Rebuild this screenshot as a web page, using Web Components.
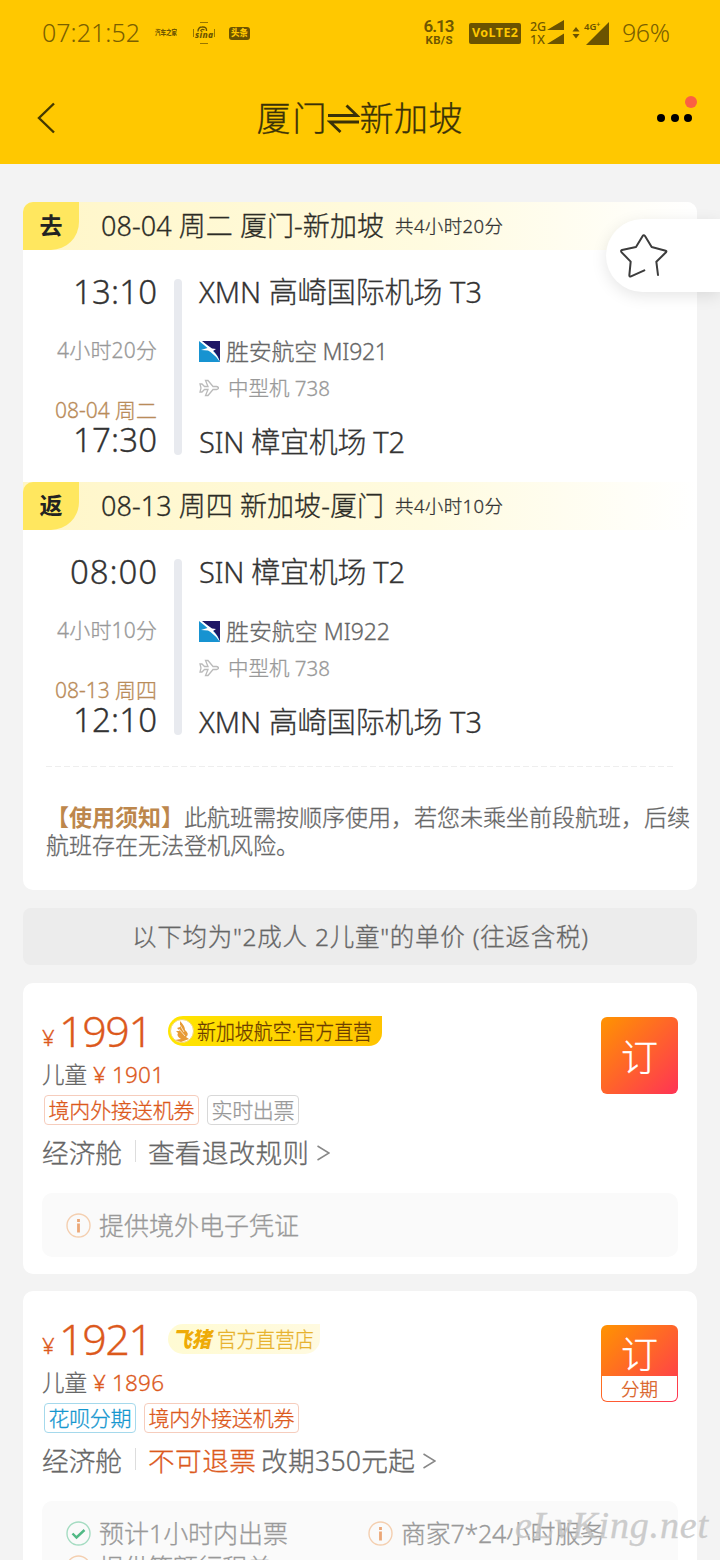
<!DOCTYPE html>
<html lang="zh-CN">
<head>
<meta charset="utf-8">
<title>厦门⇌新加坡</title>
<style>
html,body{margin:0;padding:0}
body{width:720px;height:1560px;overflow:hidden;background:#f3f3f3;font-family:"Noto Sans","Noto Sans CJK SC",sans-serif;font-weight:300;color:#333;-webkit-text-stroke:.3px currentColor}
</style>
</head>
<body>
<fare-page></fare-page>
<script>
const define = (name, render, after) => customElements.define(name, class extends HTMLElement {
  connectedCallback() {
    if (this.shadowRoot) return;
    const t = document.createElement('template');
    t.innerHTML = render(this);
    this.attachShadow({mode: 'open'}).appendChild(document.importNode(t.content, true));
    if (after) after(this);
  }
});
const a = (el, n, d = '') => el.getAttribute(n) ?? d;

// A single line of text set to a fixed measure: w = width, s = font size, squeeze = condense glyphs.
define('fit-text', el => `<style>
:host{display:block;flex:none;width:${a(el,'w')}px;font-size:${a(el,'s')}px;line-height:${a(el,'lh', 1.4)};white-space:pre;color:${a(el,'c','inherit')};font-weight:${a(el,'b','inherit')};${+a(el,'b','300') >= 500 ? '-webkit-text-stroke:0' : ''}}
span{display:inline-block;transform-origin:0 50%}</style><span><slot></slot></span>`, el => {
  const s = el.shadowRoot.querySelector('span');
  const w = +a(el, 'w'), nat = s.getBoundingClientRect().width, n = [...el.textContent].length;
  if (el.hasAttribute('squeeze')) s.style.transform = `scaleX(${w / nat})`;
  else if (n > 1) s.style.letterSpacing = (w - nat) / (n - 1) + 'px';
});

define('status-bar', () => `<style>
:host{display:flex;height:66px;align-items:center;padding-left:42px;color:#705700;box-sizing:border-box}
svg{display:block;flex:none;fill:#6b5300;-webkit-text-stroke:0}
.t{color:#7a5f00;-webkit-text-stroke:0;position:relative;top:-1px}
.apps{display:flex;align-items:center;margin-left:15px}
.sina{margin:0 14px 0 16px;width:22px;height:22px;display:grid;place-items:center}
.tt{background:#6b5300;color:#ffc800;border-radius:3px;width:21px;height:13px;display:grid;place-items:center}
.net{margin-left:173px;width:32px;display:flex;flex-direction:column;align-items:center;font-family:Roboto,sans-serif;margin-top:-2px}
.net fit-text{flex:none}
.lte{margin-left:14px;width:52px;height:21px;border-radius:2px;background:#6b5300;color:#ffc800;display:flex;align-items:center;justify-content:center}
.sig{margin-left:9px;display:flex;width:36px;gap:1px}
.col{display:flex;flex-direction:column}
</style>
<fit-text class="t" s="25" w="98">07:21:52</fit-text>
<div class="apps"><fit-text s="7" w="22" b="900" squeeze>汽车之家</fit-text>
<svg class="sina" viewBox="0 0 22 22"><g fill="none" stroke="#6b5300"><path d="M7 .5h8M7 21.500h8M.5 7v8M21.500 7v8" stroke-width=".7"/><path d="M5 9.500Q5 5 9 5Q14 4.500 13.500 9" stroke-width="1.400"/><path d="M7.500 9Q9 6.500 11.500 8" stroke-width="1.300"/></g><text x="2" y="15.500" font-family="Noto Sans" font-style="italic" font-weight="800" font-size="8.500" textLength="18">sina</text></svg>
<div class="tt"><fit-text s="9" w="17" b="900" lh="1.2" squeeze>头条</fit-text></div></div>
<div class="net"><fit-text s="17" w="31" b="600" lh="15px">6.13</fit-text><fit-text s="11.500" w="27" b="700" lh="12px">KB/S</fit-text></div>
<div class="lte"><fit-text s="12.500" w="46" b="700" lh="1">VoLTE2</fit-text></div>
<div class="sig"><div class="col"><fit-text s="12.500" w="16" b="500" lh="13px">2G</fit-text><fit-text s="12.500" w="15" b="500" lh="13px">1X</fit-text></div>
<svg width="18" height="24" viewBox="0 0 18 24"><path d="M0 10L17 0V10zM0 24L17 13.500V24z"/></svg></div>
<svg style="margin-left:6px" width="8" height="12" viewBox="0 0 8 12"><path d="M.5 4.500L4 0L7.500 4.500zM.5 7L4 11.500L7.500 7z"/></svg>
<svg style="margin-left:4px" width="26" height="24" viewBox="0 0 26 24"><path d="M2 24L25 1V24z"/><text x="0" y="8.500" font-family="Noto Sans" font-weight="600" font-size="9.500">4G<tspan dy="-2.500" font-size="7">+</tspan></text></svg>
<fit-text class="t" style="margin-left:12px" s="25" w="48">96%</fit-text>`);

define('nav-bar', () => `<style>
:host{display:flex;height:98px;align-items:center;justify-content:space-between;box-sizing:border-box;padding:7px 28px 0 37px;color:#3a3108}
svg{display:block}
.t{display:flex;align-items:center}
.m{position:relative;display:flex;gap:5.500px;margin-top:-2px}
i{width:8px;height:8px;border-radius:50%;background:#000}
b{position:absolute;right:-5px;top:-18px;width:12.500px;height:12.500px;border-radius:50%;background:#fb6042}
</style>
<svg width="20" height="32" viewBox="0 0 20 32" fill="none" stroke="#453900" stroke-width="2.400" style="margin-top:-2px"><path d="M17 1.500L2 16L17 30.500"/></svg>
<div class="t" style="margin-left:5px"><fit-text s="34" w="70">厦门</fit-text>
<svg width="33" height="34" viewBox="0 0 33 34" fill="none" stroke="#3a3108" stroke-width="2.800"><path d="M1 13.500H30L19.500 3.500M32 20H3L13.500 30"/></svg>
<fit-text s="34" w="103">新加坡</fit-text></div>
<div class="m"><i></i><i></i><i></i><b></b></div>`);

define('flight-leg', el => `<style>
:host{display:block;height:280px}
.band{height:48px;display:flex;align-items:center;background:linear-gradient(90deg,#fff6c8,#fffbe0 60%,#fff);border-radius:${a(el,'round')?'10px 10px 0 0':'0'}}
.tab{width:56px;height:48px;background:#ffe75f;border-radius:10px 0 28px 0;display:grid;place-items:center;margin-right:22px;color:#222}
.body{display:flex;padding-top:25px}
.l{width:134px;display:flex;flex-direction:column;align-items:flex-end}
.bar{width:8px;height:176px;border-radius:4px;background:#e8eaef;margin:4px 17px 0 17px}
.row{display:flex;align-items:center}
svg{display:block}
</style>
<div class="band"><div class="tab"><fit-text s="23" w="23" b="600" style="position:relative;top:-1px">${a(el,'tag')}</fit-text></div>
<fit-text s="27" w="283" c="#2c2c26">${a(el,'title')}</fit-text><fit-text style="margin-left:11px" s="18.500" w="108" c="#333">${a(el,'total')}</fit-text></div>
<div class="body"><div class="l">
<fit-text s="33" w="${a(el,'w1')}" lh="33px">${a(el,'dep')}</fit-text>
<fit-text style="margin-top:27px" s="21" w="100" lh="30px" c="#999">${a(el,'dur')}</fit-text>
<fit-text style="margin-top:31px" s="21" w="102" lh="28px" c="#b98c5a">${a(el,'date')}</fit-text>
<fit-text style="margin-top:-1px" s="33" w="84" lh="33px">${a(el,'arr')}</fit-text></div>
<div class="bar"></div><div>
<fit-text s="29" w="${a(el,'wa')}" lh="33px">${a(el,'from')}</fit-text>
<div class="row" style="margin-top:27px"><svg width="21" height="21" viewBox="0 0 21 21"><path fill="#1793d1" d="M0 0H21V21H0z"/><path fill="#1e1765" d="M2 0H21V21C19 13 13 7 2 0z"/><path fill="#fff" d="M0 0L3 0Q9 5 13 7.500L17 8L14 10Q18.500 14 21 21Q17 15 11.500 11L9 9.500L2 9L8.500 7Q5 4 0 0z"/></svg>
<fit-text style="margin-left:6px" s="23" w="${a(el,'wf')}" lh="32px" c="#666">${a(el,'flight')}</fit-text></div>
<div class="row" style="margin-top:7px"><svg width="20" height="18" viewBox="0 0 20 18" fill="none" stroke="#bbb" stroke-width="1.300"><path d="M1 5L3 5L5.500 7.500H9L6.500 1.500H9L14 7.500H17.500Q19.500 8 19.500 9Q19.500 10 17.500 10.500H14L9 16.500H6.500L9 10.500H5.500L3 13H1L2 9z"/></svg>
<fit-text style="margin-left:9px" s="20.500" w="102" lh="28px" c="#999">中型机 738</fit-text></div>
<fit-text style="margin-top:23px" s="29" w="${a(el,'wb')}" lh="33px">${a(el,'to')}</fit-text></div></div>`);

define('usage-note', () => `<style>
:host{display:block;margin:4px 7px 0 23px;height:124px;box-sizing:border-box;color:#666;width:650px}
hr{border:0;height:1px;margin:0 0 36px;width:629px;background:repeating-linear-gradient(90deg,#eee 0 6px,transparent 6px 9px)}
p{margin:0;display:flex}
</style><hr>
<p><fit-text s="23" w="138" b="600" lh="28px" c="#bd874c">【使用须知】</fit-text><fit-text s="23" w="506" lh="28px">此航班需按顺序使用，若您未乘坐前段航班，后续</fit-text></p>
<fit-text s="23" w="253" lh="28px">航班存在无法登机风险。</fit-text>`);

define('fav-button', () => `<style>
:host{position:absolute;left:606px;top:219px;width:114px;height:73px;border-radius:37px 0 0 37px;background:#fff;box-shadow:0 4px 16px rgba(0,0,0,.1);box-sizing:border-box;padding:14px 0 0 13px}
svg{display:block}</style>
<svg width="50" height="46" viewBox="777 129 150 138" fill="none" stroke="#3c3c3c" stroke-width="6" stroke-linecap="round" stroke-linejoin="round"><path d="M894 255L889 215L918 187Q921 183 917 182L875 171L855 138Q851 133 848 138L828 171L786 180Q781 182 785 187L812 215L808 256Q808 261 813 259L853 241"/></svg>`);

define('fare-tag', el => `<style>:host{display:flex;align-items:center;justify-content:center;box-sizing:border-box;width:${a(el,'w')}px;height:30px;border:1px solid ${a(el,'bc')};border-radius:4px;color:${a(el,'c')}}</style>
<fit-text s="21" w="${+a(el,'w')-9}" lh="26px">${a(el,'t')}</fit-text>`);

define('info-item', el => `<style>:host{display:flex;align-items:center;height:34px}svg{display:block;margin-right:8px;flex:none}</style>
${a(el,'ok') ? '<svg width="25" height="25" viewBox="0 0 25 25" fill="none"><circle cx="12.500" cy="12.500" r="11.500" stroke="#a5dcc2" stroke-width="1.400"/><path d="M6.500 12.500L10.500 16.500L18.500 9" stroke="#51b985" stroke-width="2.400"/></svg>'
 : '<svg width="25" height="25" viewBox="0 0 25 25" fill="none"><circle cx="12.500" cy="12.500" r="11.500" stroke="#f4cfb0" stroke-width="1.400"/><path d="M12.500 6V9M12.500 10.500V19.500" stroke="#eba777" stroke-width="2.800"/></svg>'}
<fit-text s="25" w="${a(el,'w')}" lh="34px" c="#999">${a(el,'t')}</fit-text>`);

define('book-button', el => a(el,'split') ? `<style>
:host{display:flex;flex-direction:column;align-items:center;width:77px;height:77px;box-sizing:border-box;border-radius:6px;background:linear-gradient(135deg,#ff9400,#ff3355);padding:2px 1px 1px;color:#fff}
div{width:75px;height:25px;background:#fff;border-radius:0 0 5px 5px;display:grid;place-items:center}
</style><fit-text s="37" w="37" lh="49px" style="position:relative;top:2px">订</fit-text><div><fit-text s="18.500" w="37" lh="25px" c="#d9601f">分期</fit-text></div>`
: `<style>:host{display:grid;place-items:center;width:77px;height:77px;border-radius:6px;background:linear-gradient(135deg,#ff9400,#ff3355);color:#fff;box-sizing:border-box;padding-top:3px}</style><fit-text s="37" w="37" lh="60px">订</fit-text>`);

define('airline-badge', el => a(el,'kind') === 'sq' ? `<style>
:host{display:flex;align-items:center;width:214px;height:30px;border-radius:15px 0 13px 15px;background:linear-gradient(90deg,#ffe600,#ffc400);color:#6b3c00}
svg{display:block;margin:0 2px 0 1px}</style>
<svg width="26" height="26" viewBox="0 0 26 26"><circle cx="13" cy="13" r="11.500" fill="#fff" stroke="#f6d66a"/><path d="M11 3Q16 8 16 12Q21 16 17 19L20 21L12 24L6 22L12 21Q7 18 9 15L7 13L11 13L8 10L11 9z" fill="#e79a36"/><path d="M11 7L15 14M10 11L16 18" stroke="#fff" stroke-width=".7"/></svg>
<fit-text s="21" w="175" lh="28px" squeeze>新加坡航空·官方直营</fit-text>` : `<style>
:host{display:flex;align-items:center;width:152px;height:30px;border-radius:15px 0 15px 15px;background:linear-gradient(90deg,#fffbd3,#fffae0);color:#e7b22e}
.f{font-style:italic;margin:0 6px 0 4px}</style>
<fit-text class="f" s="21" w="39" b="900" lh="28px" c="#eeab08" squeeze>飞猪</fit-text><fit-text s="21" w="97" lh="28px" squeeze>官方直营店</fit-text>`);

define('fare-card', el => `<style>
:host{display:block;position:relative;height:${a(el,'h')}px;background:#fff;border-radius:10px;padding-left:19px;box-sizing:border-box;color:#666}
.head{display:flex;justify-content:space-between;padding:24px 19px 0 0;height:78px;box-sizing:border-box;align-items:flex-start}
.p{display:flex;align-items:flex-start;color:#dc591c}
airline-badge{margin:9px 0 0 15px}
book-button{margin-top:10px}
.r{display:flex;align-items:center}
.tags{gap:8px;margin:5px 0 0 2px;height:30px}
.rule{height:44px;margin-top:6px}
.sep{width:1px;height:22px;background:#ddd;margin:-4px 12px 0 13px}
.info{margin-top:18px;width:636px;box-sizing:border-box;background:#fafafa;border-radius:10px;height:${a(el,'ih')}px;padding:15px 0 0 24px;display:grid;grid-template-columns:302px auto;align-content:start}
svg{display:block;margin-left:8px}
</style>
<div class="head"><div class="p"><fit-text s="22" w="13" lh="30px" style="margin-top:15px">¥</fit-text><fit-text style="margin-left:4px;margin-top:-1px" s="43" w="94" lh="50px">${a(el,'price')}</fit-text><airline-badge kind="${a(el,'badge')}"></airline-badge></div>
<book-button ${a(el,'split') ? 'split="1"' : ''}></book-button></div>
<div class="r" style="height:30px;margin-top:-1px"><fit-text s="22.500" w="45" lh="30px">儿童</fit-text><fit-text style="margin-left:6px" s="22.500" w="71" lh="30px" c="#dc591c">¥ ${a(el,'child')}</fit-text></div>
<div class="r tags">${a(el,'tags').split(',').map(t => ({
 a:'<fare-tag w="155" bc="#f6cdbd" c="#dc591c" t="境内外接送机券"></fare-tag>',
 b:'<fare-tag w="92" bc="#d8d8d8" c="#999" t="实时出票"></fare-tag>',
 c:'<fare-tag w="92" bc="#a5d9ec" c="#1597cf" t="花呗分期"></fare-tag>'})[t]).join('')}</div>
<div class="r rule"><fit-text s="26.700" w="80" lh="40px">经济舱</fit-text><div class="sep"></div>
${a(el,'split') ? '<fit-text s="26.700" w="108" lh="40px" c="#dc591c">不可退票</fit-text><fit-text style="margin-left:5px" s="26.700" w="154" lh="40px">改期350元起</fit-text>' : '<fit-text s="26.700" w="161" lh="40px">查看退改规则</fit-text>'}
<svg width="13" height="16" viewBox="0 0 13 16" fill="none" stroke="#888" stroke-width="1.500"><path d="M.5 1L12 8L.5 15"/></svg></div>
<div class="info">${a(el,'split') ? '<info-item ok="1" w="189" t="预计1小时内出票"></info-item><info-item w="204" t="商家7*24小时服务"></info-item><info-item w="173" t="提供等额行程单"></info-item>' : '<info-item w="200" t="提供境外电子凭证"></info-item>'}</div>`);

define('fare-page', () => `<style>
:host{display:block;position:relative;width:720px;height:1560px;overflow:hidden;background:#f3f3f3}
header{background:#ffc800;height:164px}
main{padding:38px 23px 0;display:flex;flex-direction:column}
.trip{height:688px;background:#fff;border-radius:10px}
.sum{height:57px;margin:18px 0;background:#ececec;border-radius:8px;display:flex;align-items:center;justify-content:center;color:#666}
.wm{position:absolute;left:515px;top:1500px;font-family:"Liberation Serif",serif;font-style:italic;opacity:.85}
</style>
<header><status-bar></status-bar><nav-bar></nav-bar></header>
<main><section class="trip">
<flight-leg round="1" tag="去" title="08-04 周二 厦门-新加坡" total="共4小时20分" dep="13:10" w1="84" dur="4小时20分" date="08-04 周二" arr="17:30" from="XMN 高崎国际机场 T3" wa="283" flight="胜安航空 MI921" wf="162" to="SIN 樟宜机场 T2" wb="206"></flight-leg>
<flight-leg tag="返" title="08-13 周四 新加坡-厦门" total="共4小时10分" dep="08:00" w1="87" dur="4小时10分" date="08-13 周四" arr="12:10" from="SIN 樟宜机场 T2" wa="206" flight="胜安航空 MI922" wf="164" to="XMN 高崎国际机场 T3" wb="283"></flight-leg>
<usage-note></usage-note></section>
<div class="sum"><fit-text s="24.500" w="456" lh="40px">以下均为"2成人 2儿童"的单价 (往返含税)</fit-text></div>
<fare-card h="291" ih="64" price="1991" child="1901" badge="sq" tags="a,b"></fare-card>
<fare-card style="margin-top:17px" h="330" ih="130" price="1921" child="1896" badge="fz" tags="c,a" split="1"></fare-card>
</main>
<fav-button></fav-button>
<fit-text class="wm" s="38" w="193" lh="50px" b="400" c="#c4c4c4">eLvKing.net</fit-text>`);
</script>
</body>
</html>
